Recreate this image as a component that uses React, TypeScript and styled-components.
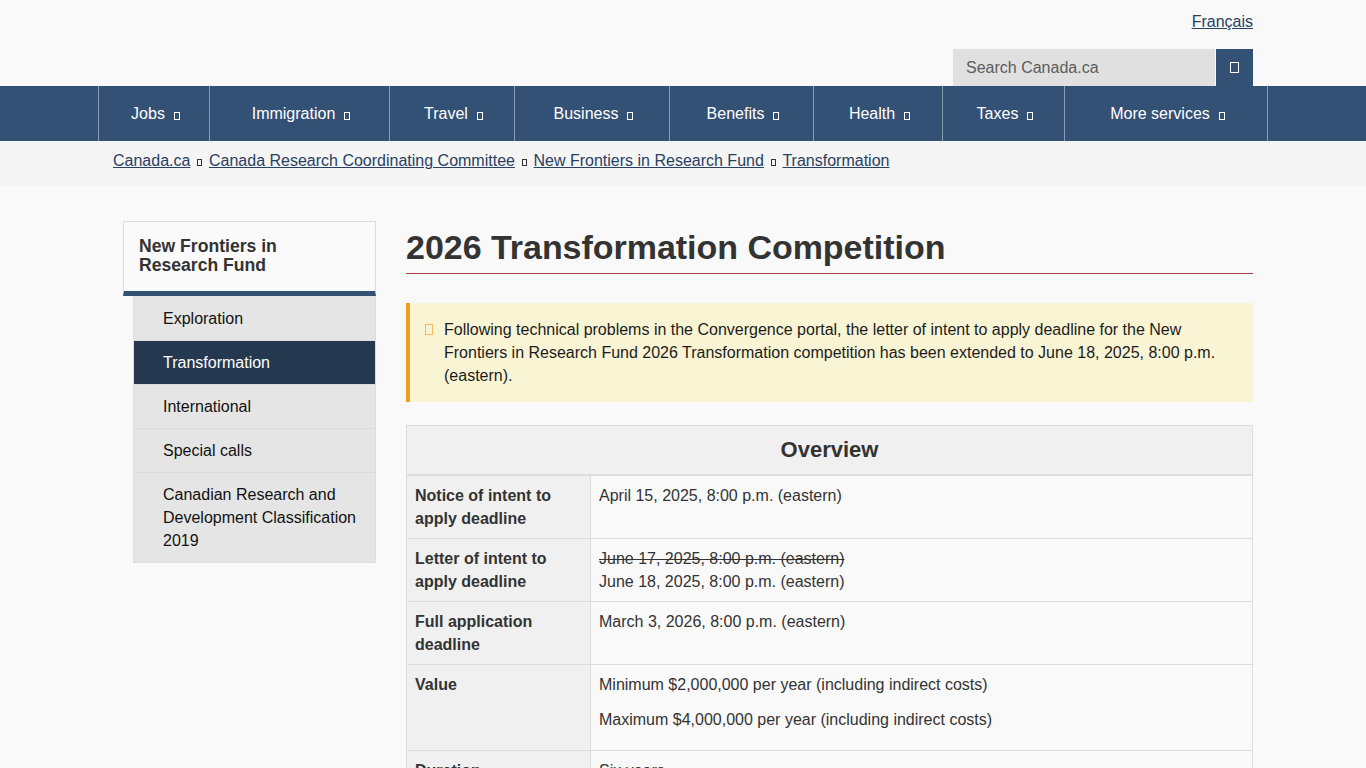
import React from 'react'
import styled, { createGlobalStyle } from 'styled-components'

const GlobalStyle = createGlobalStyle`
  html, body {
    margin: 0;
    height: 768px;
    overflow: hidden;
    background: #f9f9f9;
    color: #333;
    font-family: "Liberation Sans", Arial, sans-serif;
    font-size: 16px;
    line-height: 23px;
  }
  * { box-sizing: border-box; }
`

const Tofu = styled.span<{ $w: number; $h: number; $color: string }>`
  display: inline-block;
  width: ${({ $w }) => $w}px;
  height: ${({ $h }) => $h}px;
  border: 1px solid ${({ $color }) => $color};
  flex: none;
`

const Header = styled.header`
  width: 1140px;
  margin: 0 auto;
  height: 86px;
  display: flex;
  flex-direction: column;
  align-items: flex-end;
  padding-top: 10px;
`

const DarkLink = styled.a`
  color: #284162;
  text-decoration: underline;
`

const SearchForm = styled.form`
  display: flex;
  gap: 1px;
  margin-top: 16px;
`

const SearchInput = styled.div`
  width: 262px;
  height: 37px;
  background: #e0e0e0;
  color: #5c5c5c;
  padding: 7px 13px;
`

const SearchButton = styled.div`
  width: 37px;
  height: 37px;
  background: #335075;
  display: flex;
  align-items: center;
  justify-content: center;
`

const NavBar = styled.nav`
  background: #335075;
  height: 55px;
`

const NavRow = styled.ul`
  list-style: none;
  margin: 0 auto;
  padding: 0;
  width: 1170px;
  height: 55px;
  display: flex;
  border-left: 1px solid #8a9db3;
`

const NavItem = styled.li<{ $width: number }>`
  width: ${({ $width }) => $width}px;
  border-right: 1px solid #8a9db3;
  color: #fff;
  display: flex;
  align-items: center;
  justify-content: center;
  gap: 9px;
  padding: 0 0 1px 3px;
  ${Tofu} { margin-top: 5px; }
`

const BreadcrumbBand = styled.div`
  background: #f5f5f5;
  height: 45px;
`

const BreadcrumbRow = styled.ol`
  list-style: none;
  margin: 0 auto;
  padding: 8px 0 0;
  width: 1140px;
  display: flex;
  align-items: center;
  gap: 6.8px;
  ${Tofu} { margin-top: 3px; }
`

const Page = styled.div`
  width: 1140px;
  margin: 35px auto 0;
  display: flex;
  gap: 30px;
  align-items: flex-start;
`

const Sidebar = styled.aside`
  width: 253px;
  margin-left: 10px;
  flex: none;
`

const SideTitle = styled.h2`
  margin: 0;
  height: 75px;
  padding: 15px 15px 0;
  font-size: 17.6px;
  line-height: 19px;
  font-weight: 700;
  background: #fafafa;
  border: 1px solid #ddd;
  border-bottom: 5px solid #335075;
`

const SideList = styled.ul`
  list-style: none;
  margin: 0 0 0 10px;
  padding: 0;
  border-left: 1px solid #ddd;
  border-right: 1px solid #ddd;
  border-bottom: 1px solid #ddd;
`

const SideItem = styled.li<{ $active?: boolean }>`
  padding: 10px 15px 10px 29px;
  background: ${({ $active }) => ($active ? '#243850' : '#e5e5e5')};
  color: ${({ $active }) => ($active ? '#fff' : '#111')};
  border-top: 1px solid #dcdcdc;
  &:first-child { border-top: 0; padding-top: 11px; }
`

const Main = styled.main`
  width: 847px;
  flex: none;
`

const Title = styled.h1`
  margin: 0;
  height: 53px;
  padding-top: 6px;
  font-size: 34px;
  line-height: 40px;
  font-weight: 700;
  letter-spacing: -0.03px;
  border-bottom: 1px solid #af3c43;
`

const Alert = styled.div`
  margin-top: 29px;
  background: #f9f4d4;
  border-left: 4px solid #ee9f1c;
  padding: 15px 34px 15px 15px;
  display: flex;
  gap: 11px;
  color: #1c1c1c;
  ${Tofu} { margin-top: 6px; }
`

const Table = styled.table`
  margin-top: 23px;
  width: 847px;
  border-collapse: collapse;
  table-layout: fixed;
  border: 1px solid #ddd;
`

const Caption = styled.th`
  height: 49px;
  font-size: 22px;
  background: #f0f0f0;
  border-bottom: 2px solid #ddd;
  padding: 0;
`

const RowHead = styled.th`
  text-align: left;
  vertical-align: top;
  padding: 8px;
  background: #f0f0f0;
  border: 1px solid #ddd;
`

const Cell = styled.td`
  vertical-align: top;
  padding: 8px;
  border: 1px solid #ddd;
`

const Para = styled.p`
  margin: 0 0 12px;
  &:last-child { margin-bottom: 11px; }
`

const navItems: [string, number][] = [
  ['Jobs', 111],
  ['Immigration', 180],
  ['Travel', 125],
  ['Business', 155],
  ['Benefits', 144],
  ['Health', 129],
  ['Taxes', 122],
  ['More services', 203],
]

const crumbs = ['Canada.ca', 'Canada Research Coordinating Committee', 'New Frontiers in Research Fund', 'Transformation']

const sideItems = ['Exploration', 'Transformation', 'International', 'Special calls', 'Canadian Research and Development Classification 2019']

export default function App() {
  return (
    <>
      <GlobalStyle />
      <Header>
        <DarkLink href="#">Français</DarkLink>
        <SearchForm>
          <SearchInput>Search Canada.ca</SearchInput>
          <SearchButton>
            <Tofu $w={9} $h={11} $color="#fff" />
          </SearchButton>
        </SearchForm>
      </Header>
      <NavBar>
        <NavRow>
          {navItems.map(([label, width]) => (
            <NavItem key={label} $width={width}>
              {label}
              <Tofu $w={6} $h={8} $color="#fff" />
            </NavItem>
          ))}
        </NavRow>
      </NavBar>
      <BreadcrumbBand>
        <BreadcrumbRow>
          {crumbs.map((crumb, i) => (
            <React.Fragment key={crumb}>
              {i > 0 && <Tofu $w={5} $h={7} $color="#333" />}
              <li>
                <DarkLink href="#">{crumb}</DarkLink>
              </li>
            </React.Fragment>
          ))}
        </BreadcrumbRow>
      </BreadcrumbBand>
      <Page>
        <Sidebar>
          <SideTitle>
            New Frontiers in
            <br />
            Research Fund
          </SideTitle>
          <SideList>
            {sideItems.map((item) => (
              <SideItem key={item} $active={item === 'Transformation'}>
                {item}
              </SideItem>
            ))}
          </SideList>
        </Sidebar>
        <Main>
          <Title>2026 Transformation Competition</Title>
          <Alert>
            <Tofu $w={8} $h={11} $color="#f5b95c" />
            <span>
              Following technical problems in the Convergence portal, the letter of intent to apply deadline for the New
              Frontiers in Research Fund 2026 Transformation competition has been extended to June 18, 2025, 8:00 p.m.
              (eastern).
            </span>
          </Alert>
          <Table>
            <colgroup>
              <col width={184} />
              <col />
            </colgroup>
            <thead>
              <tr>
                <Caption colSpan={2}>Overview</Caption>
              </tr>
            </thead>
            <tbody>
              <tr>
                <RowHead>Notice of intent to apply deadline</RowHead>
                <Cell>April 15, 2025, 8:00 p.m. (eastern)</Cell>
              </tr>
              <tr>
                <RowHead>Letter of intent to apply deadline</RowHead>
                <Cell>
                  <s>June 17, 2025, 8:00 p.m. (eastern)</s>
                  <br />
                  June 18, 2025, 8:00 p.m. (eastern)
                </Cell>
              </tr>
              <tr>
                <RowHead>Full application deadline</RowHead>
                <Cell>March 3, 2026, 8:00 p.m. (eastern)</Cell>
              </tr>
              <tr>
                <RowHead>Value</RowHead>
                <Cell>
                  <Para>Minimum $2,000,000 per year (including indirect costs)</Para>
                  <Para>Maximum $4,000,000 per year (including indirect costs)</Para>
                </Cell>
              </tr>
              <tr>
                <RowHead>Duration</RowHead>
                <Cell>Six years</Cell>
              </tr>
            </tbody>
          </Table>
        </Main>
      </Page>
    </>
  )
}
